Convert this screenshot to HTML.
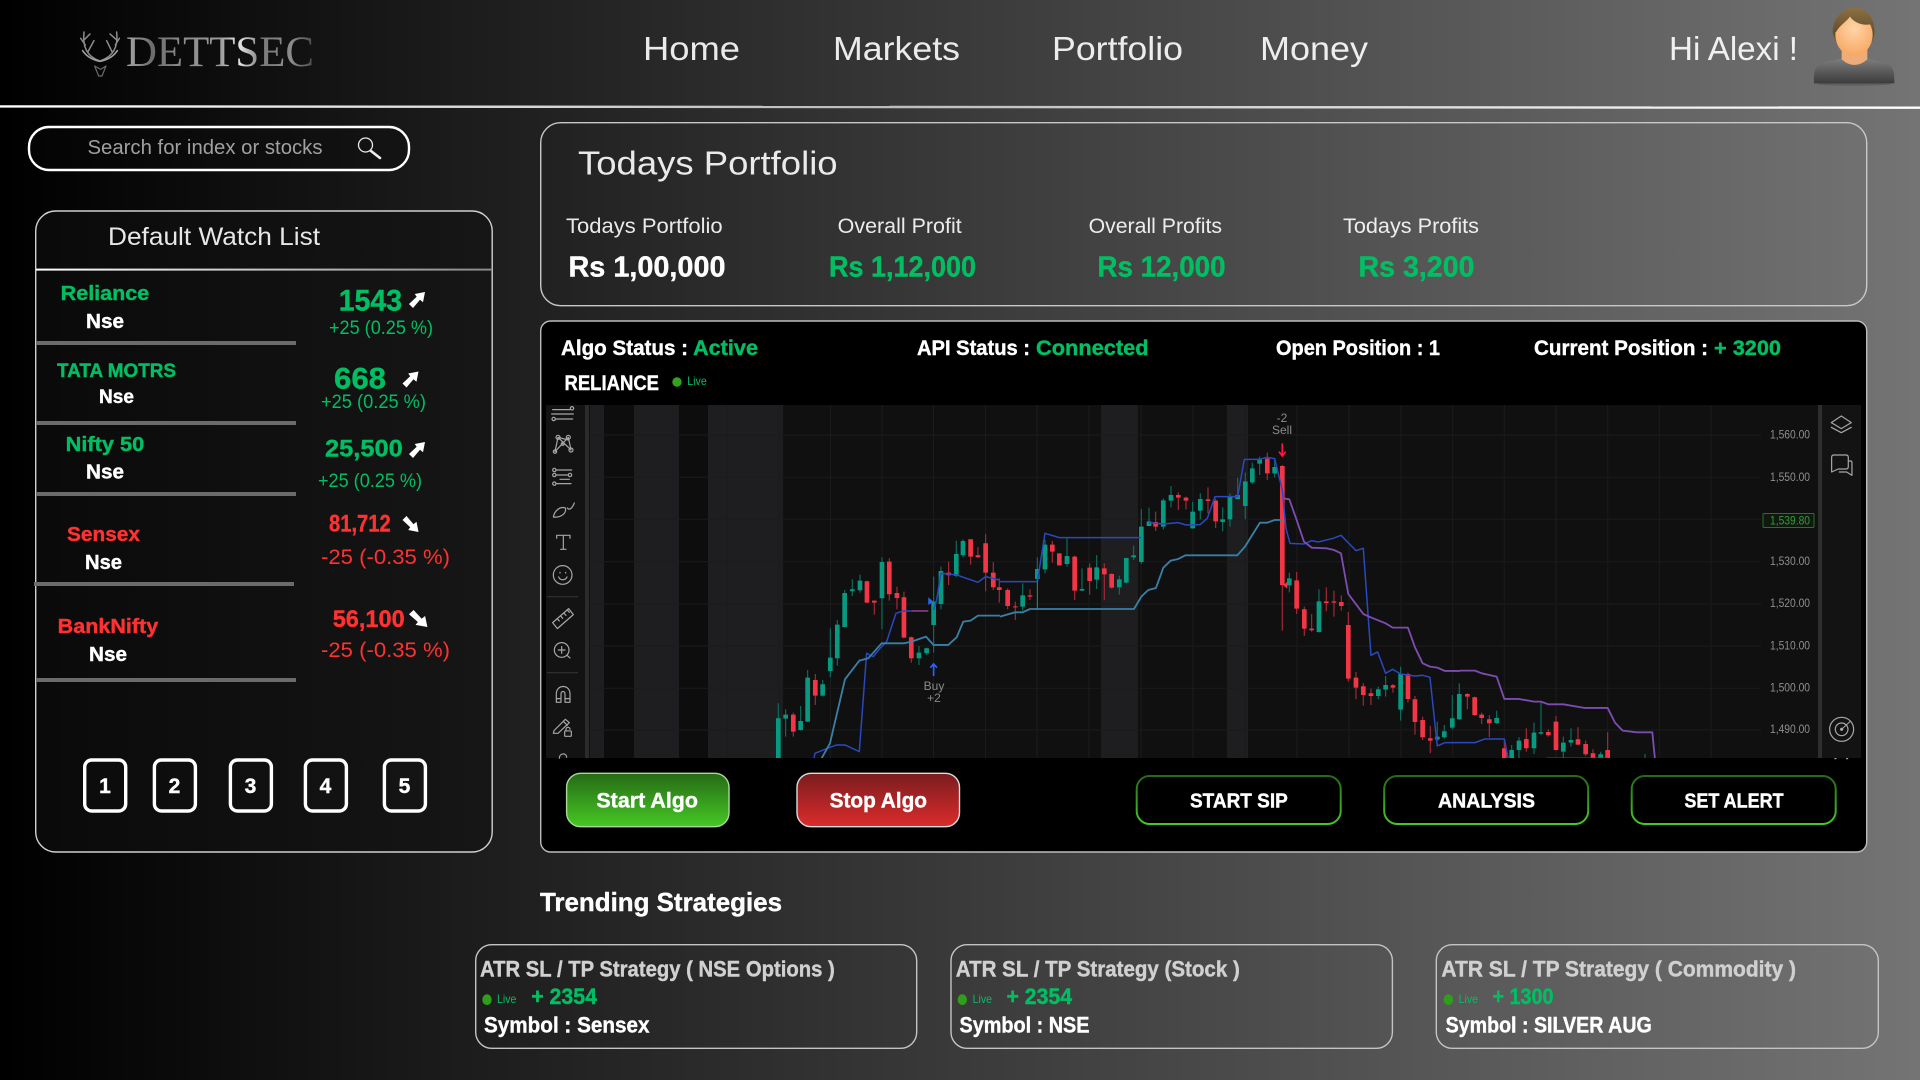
<!DOCTYPE html>
<html lang="en">
<head>
<meta charset="utf-8">
<title>Dettsec</title>
<style>
html,body{margin:0;padding:0;width:1920px;height:1080px;overflow:hidden;background:#000}
svg{display:block}
text{font-family:"Liberation Sans",Arial,sans-serif;fill:#fff;font-weight:400}
.t{fill-opacity:.9}
.b{font-weight:700;stroke:#fff;stroke-width:.4px}
.g{fill:#00bf63}
.r{fill:#ff3131}
.s{fill:#d0d0d0}
.b.g{stroke:#00bf63}
.b.r{stroke:#ff3131}
.b.s{stroke:#d0d0d0}
.lbl{font-size:11.5px;fill:#8f8f8f}
</style>
</head>
<body>
<svg width="1920" height="1080" viewBox="0 0 1920 1080">
<defs>
<linearGradient id="bg" x1="0" x2="1" y1="0" y2="0"><stop offset="0" stop-color="#000"/><stop offset="1" stop-color="#747474"/></linearGradient>
<linearGradient id="wl" x1="0" x2="1" y1="0" y2="0"><stop offset="0" stop-color="#0a0a0a"/><stop offset="1" stop-color="#161616"/></linearGradient>
<linearGradient id="hl" x1="0" x2="1" y1="0" y2="0"><stop offset="0" stop-color="#fff"/><stop offset=".45" stop-color="#bbb"/><stop offset="1" stop-color="#fff"/></linearGradient>
<linearGradient id="wln" x1="0" x2="1" y1="0" y2="0"><stop offset="0" stop-color="#fff"/><stop offset="1" stop-color="#888"/></linearGradient>
<linearGradient id="gb" x1="0" x2="0" y1="0" y2="1"><stop offset="0" stop-color="#266a15"/><stop offset="1" stop-color="#46c825"/></linearGradient>
<linearGradient id="rb" x1="0" x2="0" y1="0" y2="1"><stop offset="0" stop-color="#7a1c1e"/><stop offset="1" stop-color="#dc2c2c"/></linearGradient>
<linearGradient id="metal" x1="0" x2="1" y1="0" y2="0"><stop offset="0" stop-color="#a8a8a8"/><stop offset=".14" stop-color="#6c6c6c"/><stop offset=".3" stop-color="#8c8c8c"/><stop offset=".5" stop-color="#9a9a9a"/><stop offset=".6" stop-color="#e6e6e6"/><stop offset=".72" stop-color="#7a7a7a"/><stop offset=".88" stop-color="#8c8c8c"/><stop offset="1" stop-color="#4a4a4a"/></linearGradient>
<linearGradient id="body" x1="0" x2="0" y1="0" y2="1"><stop offset="0" stop-color="#7e7e7e"/><stop offset=".5" stop-color="#5c5c5c"/><stop offset="1" stop-color="#3c3c3c"/></linearGradient>
<linearGradient id="hair" x1="0" x2="0" y1="0" y2="1"><stop offset="0" stop-color="#8d7045"/><stop offset="1" stop-color="#5f4b28"/></linearGradient>
<radialGradient id="face" cx=".5" cy=".35" r=".7"><stop offset="0" stop-color="#ffd4a8"/><stop offset="1" stop-color="#f7a55e"/></radialGradient>
<clipPath id="cc"><rect x="589" y="405" width="1229" height="353"/></clipPath>
<path id="up" d="M5.7 2L16 0 14 10.3 11 7.7 4 16 0 12 7.7 4.7Z" fill="#fff"/>
<path id="dn" d="M5.7 14L16 16 14 5.7 11 8.3 4 0 0 4 7.7 11.3Z" fill="#fff"/>
</defs>

<rect width="1920" height="1080" fill="url(#bg)"/>

<!-- header -->
<g id="logo">
<g transform="translate(60 10) scale(.3333)" fill="none" stroke="#8c8c8c" stroke-width="4.5" stroke-linecap="round">
<path d="M118 152C88 142 66 118 72 66M76 105L62 85M74 88L90 72M84 125L102 92"/>
<path d="M122 152C152 142 176 118 170 66M166 105L178 85M168 88L150 72M156 125L140 92"/>
<path d="M68 122C80 140 100 150 120 154C140 150 160 140 172 122" stroke="#a0a0a0" stroke-width="5"/>
<path d="M104 168L116 198H126L138 168M104 168L122 178 138 168" stroke="#6c6c6c" stroke-width="3.5"/>
</g>
<text x="126" y="66" font-size="43" style="font-family:'Liberation Serif',serif;fill:url(#metal)" textLength="188" lengthAdjust="spacingAndGlyphs">DETTSEC</text>
</g>
<g id="nav" font-size="33">
<text class="t" x="643" y="60" textLength="97" lengthAdjust="spacingAndGlyphs">Home</text>
<text class="t" x="833" y="60" textLength="127" lengthAdjust="spacingAndGlyphs">Markets</text>
<text class="t" x="1052" y="60" textLength="131" lengthAdjust="spacingAndGlyphs">Portfolio</text>
<text class="t" x="1260" y="60" textLength="108" lengthAdjust="spacingAndGlyphs">Money</text>
<text class="t" x="1669" y="60" textLength="129" lengthAdjust="spacingAndGlyphs">Hi Alexi !</text>
</g>
<g id="avatar" transform="translate(1790 0) scale(.3333)">
<ellipse cx="192" cy="252" rx="112" ry="5" fill="#3c3c3c" opacity=".35"/>
<path d="M72 250C70 215 75 197 100 188L155 175Q193 205 232 175L285 188C310 197 314 215 313 250Z" fill="url(#body)"/>
<path d="M155 145L155 178Q193 212 232 178L232 145Z" fill="#eeac78"/>
<path d="M128 100C125 50 165 22 192 22C225 22 258 50 253 105L246 125H138Z" fill="url(#hair)"/>
<ellipse cx="192" cy="105" rx="56" ry="63" fill="url(#face)"/>
<path d="M130 100C128 50 165 22 192 22C225 22 255 50 252 105L246 72C225 78 195 72 180 50C170 65 150 75 139 95Z" fill="url(#hair)"/>
</g>
<line x1="0" y1="106.4" x2="1920" y2="107.7" stroke="url(#hl)" stroke-width="2.4"/>

<!-- search -->
<rect x="29" y="127" width="380" height="43" rx="20" fill="#0a0a0a" fill-opacity=".3" stroke="#fff" stroke-width="2.4"/>
<text x="87.5" y="154" font-size="20" style="fill:#a0a0a0" textLength="235" lengthAdjust="spacingAndGlyphs">Search for index or stocks</text>
<circle cx="365.5" cy="145" r="7" fill="none" stroke="#e8e8e8" stroke-width="1.3"/>
<path d="M371 151L380 158" stroke="#eee" stroke-width="2.6" stroke-linecap="round"/>

<!-- watchlist -->
<rect x="35.7" y="211" width="456.5" height="641" rx="20" fill="url(#wl)" stroke="#d0d0d0" stroke-width="1.4"/>
<text class="t" x="108" y="245" font-size="25" textLength="212" lengthAdjust="spacingAndGlyphs">Default Watch List</text>
<rect x="36" y="268.6" width="456" height="2" fill="url(#wln)"/>
<g fill="#6b6b6b">
<rect x="36" y="341" width="260" height="4"/><rect x="36" y="421" width="260" height="4"/><rect x="36" y="492" width="260" height="4"/><rect x="34" y="582" width="260" height="4"/><rect x="36" y="678" width="260" height="4"/>
</g>
<g font-size="20.5">
<text class="b g" x="60.7" y="300" textLength="88.5" lengthAdjust="spacingAndGlyphs">Reliance</text>
<text class="b" x="86" y="328" textLength="38" lengthAdjust="spacingAndGlyphs">Nse</text>
<text class="b g" x="57" y="377" font-size="19" textLength="119" lengthAdjust="spacingAndGlyphs">TATA MOTRS</text>
<text class="b" x="99" y="403" font-size="19" textLength="35" lengthAdjust="spacingAndGlyphs">Nse</text>
<text class="b g" x="65.7" y="451" textLength="78.5" lengthAdjust="spacingAndGlyphs">Nifty 50</text>
<text class="b" x="86" y="478.7" textLength="38" lengthAdjust="spacingAndGlyphs">Nse</text>
<text class="b r" x="67" y="541" textLength="73" lengthAdjust="spacingAndGlyphs">Sensex</text>
<text class="b" x="85" y="569" textLength="37" lengthAdjust="spacingAndGlyphs">Nse</text>
<text class="b r" x="57.7" y="633" textLength="100.5" lengthAdjust="spacingAndGlyphs">BankNifty</text>
<text class="b" x="89" y="661" textLength="38" lengthAdjust="spacingAndGlyphs">Nse</text>
</g>
<text class="b g" x="338.7" y="310.7" font-size="30" textLength="63.5" lengthAdjust="spacingAndGlyphs">1543</text>
<text class="g" x="329" y="334" font-size="19" textLength="104" lengthAdjust="spacingAndGlyphs">+25 (0.25 %)</text>
<use href="#up" x="409" y="292"/>
<text class="b g" x="334" y="388.7" font-size="30" textLength="52" lengthAdjust="spacingAndGlyphs">668</text>
<text class="g" x="321" y="408" font-size="19" textLength="105" lengthAdjust="spacingAndGlyphs">+25 (0.25 %)</text>
<use href="#up" x="402.5" y="371.5"/>
<text class="b g" x="325" y="456.7" font-size="24.5" textLength="77.7" lengthAdjust="spacingAndGlyphs">25,500</text>
<text class="g" x="318" y="487" font-size="19" textLength="104" lengthAdjust="spacingAndGlyphs">+25 (0.25 %)</text>
<use href="#up" x="409" y="442"/>
<text class="b r" x="329" y="531.7" font-size="24.5" textLength="61.7" lengthAdjust="spacingAndGlyphs">81,712</text>
<text class="r" x="321" y="564" font-size="21" textLength="129" lengthAdjust="spacingAndGlyphs">-25 (-0.35 %)</text>
<use href="#dn" x="402.5" y="516"/>
<text class="b r" x="332.7" y="627" font-size="24.5" textLength="72" lengthAdjust="spacingAndGlyphs">56,100</text>
<text class="r" x="321" y="657" font-size="21" textLength="129" lengthAdjust="spacingAndGlyphs">-25 (-0.35 %)</text>
<use href="#dn" transform="translate(409 610) scale(1.15 1.06)"/>
<g fill="none" stroke="#fff" stroke-width="3.4">
<rect x="84.7" y="760" width="41" height="51" rx="7"/>
<rect x="154.4" y="760" width="41" height="51" rx="7"/>
<rect x="230.4" y="760" width="41" height="51" rx="7"/>
<rect x="305.4" y="760" width="41" height="51" rx="7"/>
<rect x="384.4" y="760" width="41" height="51" rx="7"/>
</g>
<g font-size="21" text-anchor="middle">
<text class="b" x="105" y="793">1</text><text class="b" x="174.5" y="793">2</text><text class="b" x="250.5" y="793">3</text><text class="b" x="325.5" y="793">4</text><text class="b" x="404.5" y="793">5</text>
</g>

<!-- portfolio -->
<rect x="540.7" y="122.7" width="1326" height="183" rx="20" fill="none" stroke="#c8c8c8" stroke-width="1.4"/>
<text class="t" x="578" y="174.7" font-size="33" textLength="259.6" lengthAdjust="spacingAndGlyphs">Todays Portfolio</text>
<g font-size="21">
<text class="t" x="566" y="233" textLength="156.6" lengthAdjust="spacingAndGlyphs">Todays Portfolio</text>
<text class="t" x="837.7" y="233" textLength="124" lengthAdjust="spacingAndGlyphs">Overall Profit</text>
<text class="t" x="1088.6" y="233" textLength="133.4" lengthAdjust="spacingAndGlyphs">Overall Profits</text>
<text class="t" x="1343" y="233" textLength="136" lengthAdjust="spacingAndGlyphs">Todays Profits</text>
</g>
<g font-size="29">
<text class="b" x="568.5" y="276.7" textLength="157" lengthAdjust="spacingAndGlyphs">Rs 1,00,000</text>
<text class="b g" x="829" y="276.7" textLength="147" lengthAdjust="spacingAndGlyphs">Rs 1,12,000</text>
<text class="b g" x="1097.5" y="276.7" textLength="128" lengthAdjust="spacingAndGlyphs">Rs 12,000</text>
<text class="b g" x="1358.5" y="276.7" textLength="116" lengthAdjust="spacingAndGlyphs">Rs 3,200</text>
</g>

<!-- algo panel -->
<rect x="540.7" y="321" width="1326" height="531" rx="10" fill="#000" stroke="#bdbdbd" stroke-width="1.4"/>
<g font-size="21">
<text class="b" x="561" y="355" textLength="127" lengthAdjust="spacingAndGlyphs">Algo Status :</text>
<text class="b g" x="693" y="355" textLength="65" lengthAdjust="spacingAndGlyphs">Active</text>
<text class="b" x="917" y="355" textLength="113" lengthAdjust="spacingAndGlyphs">API Status :</text>
<text class="b g" x="1036" y="355" textLength="112.6" lengthAdjust="spacingAndGlyphs">Connected</text>
<text class="b" x="1276" y="355" textLength="164" lengthAdjust="spacingAndGlyphs">Open Position : 1</text>
<text class="b" x="1534" y="355" textLength="174" lengthAdjust="spacingAndGlyphs">Current Position :</text>
<text class="b g" x="1714" y="355" textLength="67" lengthAdjust="spacingAndGlyphs">+ 3200</text>
<text class="b" x="564.5" y="390" textLength="94.5" lengthAdjust="spacingAndGlyphs">RELIANCE</text>
</g>
<circle cx="677" cy="382" r="4.7" fill="#32a31a"/>
<text class="g" x="687.3" y="385" font-size="12" textLength="19.4" lengthAdjust="spacingAndGlyphs">Live</text>

<!-- chart -->
<rect x="546" y="405" width="1315" height="353" fill="#101011"/>
<rect x="546" y="405" width="39" height="353" fill="#131313"/>
<rect x="1822" y="405" width="39" height="353" fill="#131313"/>
<rect x="585" y="405" width="4" height="353" fill="#2b2b2b"/>
<rect x="1818" y="405" width="4" height="353" fill="#2e2e2e"/>
<g fill="#1e1e20">
<rect x="590" y="405" width="14" height="353"/><rect x="634" y="405" width="45" height="353"/><rect x="708" y="405" width="75" height="353"/><rect x="1101" y="405" width="37" height="353"/><rect x="1227" y="405" width="21" height="353"/>
</g>
<g fill="#0d0d0d"><rect x="604" y="405" width="30" height="353"/><rect x="679" y="405" width="29" height="353"/></g>
<g stroke="#1b1b1c" stroke-width="1" fill="none">
<path d="M589 435H1761M589 477.3H1761M589 519.3H1761M589 561.7H1761M589 604H1761M589 646H1761M589 688.3H1761M589 730H1761"/>
<path d="M727.3 405V758M779 405V758M830.5 405V758M882 405V758M933.5 405V758M985.5 405V758M1037 405V758M1089 405V758M1141 405V758M1193 405V758M1245 405V758M1297 405V758M1349 405V758M1401 405V758M1452.7 405V758M1504.3 405V758M1556 405V758M1607.7 405V758M1659.3 405V758M1711 405V758"/>
</g>

<g clip-path="url(#cc)" fill="none">
<g transform="translate(540 320) scale(.3333)">
<path stroke="#0b6e5d" stroke-width="3.5" d="M715 1150V1315M737 1168V1250M782 1158V1232M803 1050V1206M848 1080V1130M871 925V1072M892 900V1037M914 810V922M937 778V828M960 764V818M1026 712V928M1137 978V1035M1160 983V1005M1181 770V998M1203 740V868M1249 662V772M1269 658V712"/>
<path stroke="#089981" stroke-width="14" d="M715 1195V1315M737 1184V1196M782 1203V1230M803 1073V1205M848 1093V1127M871 1013V1053M892 914V1015M914 819V921M937 808V814M960 782V811M1026 726V835M1137 998V1015M1160 985V1000M1181 845V915M1203 753V852M1249 702V768M1269 663V706"/>
<path stroke="#a32a38" stroke-width="3.5" d="M760 1178V1250M826 1062V1155M981 782V850M1003 842V884M1048 715V842M1071 800V868M1092 815V955M1114 950V1028M1226 725V795M1292 658V734M1314 682V714M1337 642V814M1360 726V810M1378 775V848"/>
<path stroke="#f23645" stroke-width="14" d="M760 1184V1235M826 1080V1127M981 784V848M1003 842V848M1048 725V823M1071 819V834M1092 832V953M1114 952V1015M1226 758V766M1292 658V710M1314 706V712M1337 670V758M1360 758V802M1378 802V810"/>
<path stroke="#2a48c0" stroke-width="4.5" stroke-linejoin="round" d="M822 1315L825 1300 870 1282 890 1275 915 1275 958 1295 980 1000 1000 1010 1020 985 1040 965 1068 880 1090 873H1115"/>
<path stroke="#8c3a8a" stroke-width="5" d="M1115 873H1165"/>
<path stroke="#2a48c0" stroke-width="4.5" stroke-linejoin="round" d="M1181 870L1190 840 1203 760 1225 762 1250 765 1314 787 1337 770 1378 780"/>
<path stroke="#3a7fa6" stroke-width="5.5" stroke-linejoin="round" d="M845 1315L870 1270 915 1078 958 1022 985 1015 1025 970 1092 970 1115 965 1158 950 1181 975 1225 975 1250 952 1270 905 1292 902 1314 887 1380 887"/>
<path fill="#2962ff" stroke="none" d="M1165 832L1180 845 1165 855Z"/>
<path stroke="#2962ff" stroke-width="5" d="M1181 1068V1034M1171 1043L1181 1032 1191 1043"/>
</g>
<g transform="translate(1000 400) scale(.3333)">
<path stroke="#0b6e5d" stroke-width="3.5" d="M68 550V632M112 472V630M135 420V520M201 414V500M246 505V574M290 465V567M358 527V584M379 473V550M401 437V480M424 327V492M447 323V378M490 295V388M513 258V322M578 305V386M601 280V358M668 322V394M690 280V380M713 233V296M736 218V358M757 188V252M779 170V225M824 175V232M868 518V577M957 568V698M1135 860V898M1157 828V890M1202 800V962M1312 965V1022M1333 975V1016M1357 885V988M1378 850V960"/>
<path stroke="#089981" stroke-width="14" d="M68 586V620M112 507V537M135 434V508M201 468V492M246 567V572M290 502V539M358 538V562M379 474V548M401 466V472M424 380V486M447 364V378M490 301V380M513 285V302M578 335V385M601 297V332M668 358V366M690 290V358M713 285V297M736 244V318M757 205V247M779 176V191M824 201V220M868 535V556M957 604V696M1135 868V888M1157 855V869M1202 822V929M1312 1010V1019M1333 994V1012M1357 955V983M1378 882V958"/>
<path stroke="#a32a38" stroke-width="3.5" d="M23 565V628M46 605V660M90 568V600M157 423V488M178 460V497M224 467V600M269 490V584M313 490V600M335 520V566M467 335V393M535 277V330M558 290V328M624 262V340M647 296V384M802 158V240M847 195V692M890 516V642M913 620V708M935 642V695M979 562V634M1002 572V650M1024 586V632M1045 636V845M1068 816V898M1090 850V917M1113 866V915M1179 852V878M1224 818V908M1245 888V1004M1268 950V1020M1291 978V1060"/>
<path stroke="#f23645" stroke-width="14" d="M23 570V618M46 619V622M90 586V590M157 434V455M178 460V496M224 470V572M269 503V543M313 505V523M335 522V563M467 366V380M535 285V293M558 293V302M624 298V303M647 302V364M802 176V220M847 198V555M890 541V626M913 628V686M935 686V691M979 604V609M1002 604V608M1024 606V618M1045 675V836M1068 833V863M1090 859V885M1113 880V888M1179 856V863M1224 822V897M1245 898V966M1268 960V1012M1291 1015V1022"/>
<path stroke="#2a48c0" stroke-width="4.5" stroke-linejoin="round" d="M0 545H112L135 400 178 413H424M447 368L490 372 535 368 558 375 600 374 622 355 645 290H713L733 178H780L800 172 824 176 847 270 858 385 870 430 912 432 935 422 955 426 1000 415 1023 406 1068 452 1090 445 1113 766 1133 756 1157 820 1178 808 1202 822 1245 828 1268 826 1290 832 1312 1038 1335 1028H1380"/>
<path stroke="#3a7fa6" stroke-width="5.5" stroke-linejoin="round" d="M0 650L45 637H68L90 627H402L424 590 445 570 468 564 490 503 512 482 535 477 556 466H712L735 440 780 368H802L824 360H847"/>
<path stroke="#3a7fa6" stroke-width="2" d="M112 540V628"/>
<path stroke="#7d4cb0" stroke-width="5.5" stroke-linejoin="round" d="M850 295L868 298 890 360 912 425 935 443 980 445 1002 450 1023 460 1045 582 1090 642 1112 652 1157 670 1178 683H1224L1245 742 1268 790 1290 800 1312 803 1335 813H1380"/>
<path fill="#f23645" stroke="none" d="M862 545L850 556 862 566Z"/>
<path stroke="#ff1744" stroke-width="5" d="M847 130V165M837 155L847 168 857 155"/>
</g>
<g transform="translate(1460 400) scale(.3333)">
<path stroke="#0b6e5d" stroke-width="3.5" d="M110 932V972M155 1035V1075M177 1012V1075M222 968V1062M243 908V1005M310 1010V1075M333 985V1040M422 1055V1075M555 1062V1075"/>
<path stroke="#089981" stroke-width="14" d="M110 954V969M155 1050V1075M177 1022V1050M222 998V1045M243 997V1001M310 1028V1055M333 1020V1028M422 1063V1075"/>
<path stroke="#a32a38" stroke-width="3.5" d="M22 880V928M44 890V948M65 938V972M88 946V1012M133 1020V1075M199 985V1055M265 988V1010M288 948V1052M354 982V1036M377 1022V1068M399 1048V1075M443 997V1075"/>
<path stroke="#f23645" stroke-width="14" d="M22 882V890M44 892V945M65 944V954M88 958V970M133 1045V1075M199 1017V1045M265 996V1006M288 965V1050M354 1018V1034M377 1032V1063M399 1060V1075M443 1050V1075"/>
<path stroke="#2a48c0" stroke-width="4.5" stroke-linejoin="round" d="M0 1028H45L75 1017H133L145 1078M260 1075H445"/>
<path stroke="#7d4cb0" stroke-width="5.5" stroke-linejoin="round" d="M0 812H45L65 820 110 830 133 897H177L222 905H243L265 913H310L375 924H443L465 968 488 992 530 997H577L585 1078"/>
</g>
</g>

<g class="buysell" font-size="12" text-anchor="middle">
<text x="934" y="690" style="fill:#8a8a8a">Buy</text>
<text x="934" y="702" style="fill:#8a8a8a">+2</text>
<text x="1282" y="422" style="fill:#8a8a8a">-2</text>
<text x="1282" y="434" style="fill:#8a8a8a">Sell</text>
</g>
<g>
<text class="lbl" x="1770" y="438.6" textLength="40" lengthAdjust="spacingAndGlyphs">1,560.00</text>
<text class="lbl" x="1770" y="481" textLength="40" lengthAdjust="spacingAndGlyphs">1,550.00</text>
<rect x="1763" y="513.5" width="51" height="14" rx="1" fill="#0f1a0f" stroke="#2c6e2c" stroke-width="1"/>
<text x="1770" y="524.5" font-size="11.5" style="fill:#3a9a3a" textLength="40" lengthAdjust="spacingAndGlyphs">1,539.80</text>
<text class="lbl" x="1770" y="565" textLength="40" lengthAdjust="spacingAndGlyphs">1,530.00</text>
<text class="lbl" x="1770" y="607" textLength="40" lengthAdjust="spacingAndGlyphs">1,520.00</text>
<text class="lbl" x="1770" y="649.5" textLength="40" lengthAdjust="spacingAndGlyphs">1,510.00</text>
<text class="lbl" x="1770" y="691.5" textLength="40" lengthAdjust="spacingAndGlyphs">1,500.00</text>
<text class="lbl" x="1770" y="733" textLength="40" lengthAdjust="spacingAndGlyphs">1,490.00</text>
</g>

<!-- left toolbar -->
<g transform="translate(540 320) scale(.3333)" fill="none" stroke="#a6a6a6" stroke-width="3.6" stroke-linecap="round" stroke-linejoin="round">
<path d="M38 269H90M35 282H100M48 297H98"/><circle cx="96" cy="265" r="5"/><circle cx="41" cy="297" r="5"/>
<path d="M54 352L45 395M54 352L93 390M85 352L45 395M85 352L93 390M54 352L85 360"/><circle cx="54" cy="352" r="6"/><circle cx="85" cy="352" r="6"/><circle cx="45" cy="395" r="5"/><circle cx="93" cy="390" r="6"/><circle cx="68" cy="372" r="4"/>
<path d="M50 450H95M50 465H84M50 491H93M60 478H88" /><circle cx="43" cy="450" r="5"/><circle cx="43" cy="465" r="5"/><circle cx="43" cy="491" r="5"/><circle cx="90" cy="465" r="5"/>
<path d="M40 591C44 572 60 558 76 564C80 578 66 594 40 591ZM82 564C88 572 96 566 103 549"/>
<path d="M50 655V646H90V655M70 646V688M62 688H78"/>
<circle cx="68" cy="765" r="28"/><path d="M56 771C60 782 76 782 81 771M60 757V759M77 757V759"/>
<path d="M38 908L86 866 100 884 52 926ZM52 897L58 903M62 888L68 895M72 880L78 886M82 870L88 877"/>
<circle cx="65" cy="990" r="22"/><path d="M55 990H75M65 980V1000M81 1006L90 1014"/>
<path d="M49 1147V1122C49 1092 90 1092 90 1122V1147H75V1122C75 1112 63 1112 63 1122V1147ZM49 1136H63M75 1136H90"/>
<path d="M42 1232L76 1198 88 1208 54 1240 40 1240ZM70 1204L82 1216"/><rect x="74" y="1233" width="20" height="16" rx="2"/><path d="M78 1233V1228C78 1220 90 1220 90 1228"/>
<path d="M58 1315C58 1298 80 1298 80 1312"/>
</g>
<path d="M547 596.7H578M547 672.7H578" stroke="#2d2d2d" stroke-width="1.4"/>

<!-- right toolbar -->
<g transform="translate(1460 400) scale(.3333)" fill="none" stroke="#a6a6a6" stroke-width="3.6" stroke-linecap="round" stroke-linejoin="round">
<path d="M1144 48L1174 68 1144 86 1114 68ZM1114 82L1144 98 1174 82"/>
<path d="M1122 165H1158Q1165 165 1165 172V200Q1165 207 1158 207H1135L1115 216V172Q1115 165 1122 165ZM1165 183H1172Q1176 183 1176 188V226L1160 216H1138"/>
<circle cx="1145" cy="988" r="36"/><circle cx="1145" cy="988" r="19"/><path d="M1145 988L1170 965" stroke-width="3"/><circle cx="1145" cy="988" r="3" fill="#ddd"/>
<path d="M1125 1076H1128M1160 1076H1163"/>
</g>

<!-- buttons -->
<rect x="566.6" y="773.3" width="162.4" height="53.4" rx="14" fill="url(#gb)" stroke="#a8d99a" stroke-width="1.4"/>
<text class="b" x="596.4" y="807.3" font-size="21" textLength="101.6" lengthAdjust="spacingAndGlyphs">Start Algo</text>
<rect x="797" y="773.3" width="162.5" height="53.4" rx="14" fill="url(#rb)" stroke="#ddd" stroke-width="1.4"/>
<text class="b" x="829.6" y="807.3" font-size="21" textLength="97.4" lengthAdjust="spacingAndGlyphs">Stop Algo</text>
<g fill="#000" stroke="url(#gb)" stroke-width="2">
<rect x="1136.7" y="776" width="204" height="48" rx="13"/>
<rect x="1384.2" y="776" width="204" height="48" rx="13"/>
<rect x="1631.7" y="776" width="204" height="48" rx="13"/>
</g>
<g font-size="20.5">
<text class="b" x="1190" y="807.7" textLength="97.8" lengthAdjust="spacingAndGlyphs">START SIP</text>
<text class="b" x="1438" y="807.7" textLength="97" lengthAdjust="spacingAndGlyphs">ANALYSIS</text>
<text class="b" x="1684.4" y="807.7" textLength="99.2" lengthAdjust="spacingAndGlyphs">SET ALERT</text>
</g>

<!-- strategies -->
<text class="b" x="540" y="911" font-size="26" textLength="242" lengthAdjust="spacingAndGlyphs">Trending Strategies</text>
<g fill="none" stroke="#c4c4c4" stroke-width="1.4">
<rect x="475.7" y="944.7" width="441" height="103.6" rx="16"/>
<rect x="951" y="944.7" width="441.4" height="103.6" rx="16"/>
<rect x="1436.3" y="944.7" width="442" height="103.6" rx="16"/>
</g>
<g font-size="22">
<text class="b s" x="480" y="976.5" textLength="354.8" lengthAdjust="spacingAndGlyphs">ATR SL / TP Strategy ( NSE Options )</text>
<text class="b s" x="955.8" y="976.5" textLength="284" lengthAdjust="spacingAndGlyphs">ATR SL / TP Strategy (Stock )</text>
<text class="b s" x="1441.4" y="976.5" textLength="354.6" lengthAdjust="spacingAndGlyphs">ATR SL / TP Strategy ( Commodity )</text>
<text class="b g" x="531.2" y="1004" textLength="65.8" lengthAdjust="spacingAndGlyphs">+ 2354</text>
<text class="b g" x="1006.5" y="1004" textLength="65.5" lengthAdjust="spacingAndGlyphs">+ 2354</text>
<text class="b g" x="1492.5" y="1004" textLength="61" lengthAdjust="spacingAndGlyphs">+ 1300</text>
<text class="b" x="484" y="1032.5" textLength="165.5" lengthAdjust="spacingAndGlyphs">Symbol : Sensex</text>
<text class="b" x="959.5" y="1032.5" textLength="130" lengthAdjust="spacingAndGlyphs">Symbol : NSE</text>
<text class="b" x="1445.6" y="1032.5" textLength="206.2" lengthAdjust="spacingAndGlyphs">Symbol : SILVER AUG</text>
</g>
<g fill="#2f9e1a">
<ellipse cx="487" cy="999.7" rx="4.7" ry="5.4"/><ellipse cx="962.3" cy="999.7" rx="4.7" ry="5.4"/><ellipse cx="1448.4" cy="999.7" rx="4.7" ry="5.4"/>
</g>
<g font-size="12">
<text class="g" x="497" y="1003" textLength="19.3" lengthAdjust="spacingAndGlyphs">Live</text>
<text class="g" x="972.6" y="1003" textLength="19.4" lengthAdjust="spacingAndGlyphs">Live</text>
<text class="g" x="1458.6" y="1003" textLength="19.4" lengthAdjust="spacingAndGlyphs">Live</text>
</g>
</svg>
</body>
</html>
